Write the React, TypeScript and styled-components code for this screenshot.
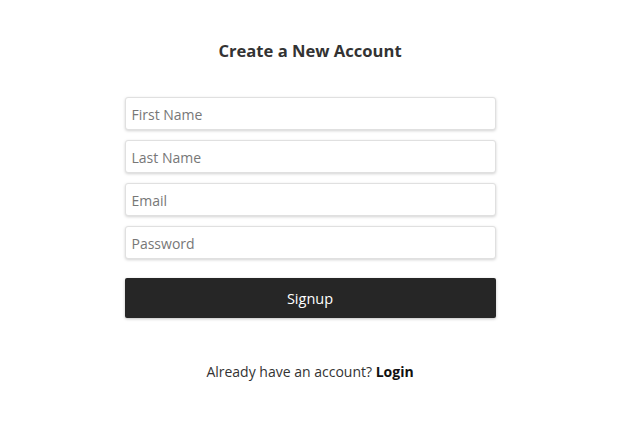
import React from "react";
import styled, { createGlobalStyle } from "styled-components";

const Global = createGlobalStyle`
  html, body { margin: 0; padding: 0; background: #fff; }
  body { font-family: "Open Sans", "Noto Sans", Arial, sans-serif; }
  * { box-sizing: border-box; }
`;

const Page = styled.div`
  width: 620px;
  height: 437px;
  display: flex;
  flex-direction: column;
  align-items: center;
  padding-top: 39px;
`;

const Title = styled.h1`
  margin: 0;
  font-size: 16.6px;
  font-weight: 700;
  color: #333;
  line-height: 24px;
`;

const Form = styled.form`
  width: 371px;
  margin-top: 34px;
  display: flex;
  flex-direction: column;
  gap: 10px;
`;

const Input = styled.input`
  height: 33px;
  width: 100%;
  border: 1px solid #e0e0e0;
  border-radius: 3px;
  box-shadow: 0 1px 3px rgba(0, 0, 0, 0.18);
  padding: 2px 6px 0;
  font-family: "Open Sans", "Noto Sans", Arial, sans-serif;
  font-size: 14px;
  color: #333;
  outline: none;
  &::placeholder { color: #777; }
`;

const Button = styled.button`
  margin-top: 9px;
  height: 40px;
  width: 100%;
  border: none;
  border-radius: 2px;
  background: #262626;
  color: #fff;
  font-family: "Open Sans", "Noto Sans", Arial, sans-serif;
  font-size: 14.5px;
  box-shadow: 0 1px 3px rgba(0, 0, 0, 0.25);
  cursor: pointer;
`;

const Footer = styled.p`
  margin: 44px 0 0;
  font-size: 14px;
  color: #333;
  line-height: 20px;
`;

const LoginLink = styled.a`
  font-weight: 700;
  color: #111;
  text-decoration: none;
`;

export default function App() {
  return (
    <>
      <Global />
      <Page>
        <Title>Create a New Account</Title>
        <Form onSubmit={(e) => e.preventDefault()}>
          <Input type="text" placeholder="First Name" />
          <Input type="text" placeholder="Last Name" />
          <Input type="email" placeholder="Email" />
          <Input type="password" placeholder="Password" />
          <Button type="submit">Signup</Button>
        </Form>
        <Footer>
          Already have an account? <LoginLink href="#">Login</LoginLink>
        </Footer>
      </Page>
    </>
  );
}
